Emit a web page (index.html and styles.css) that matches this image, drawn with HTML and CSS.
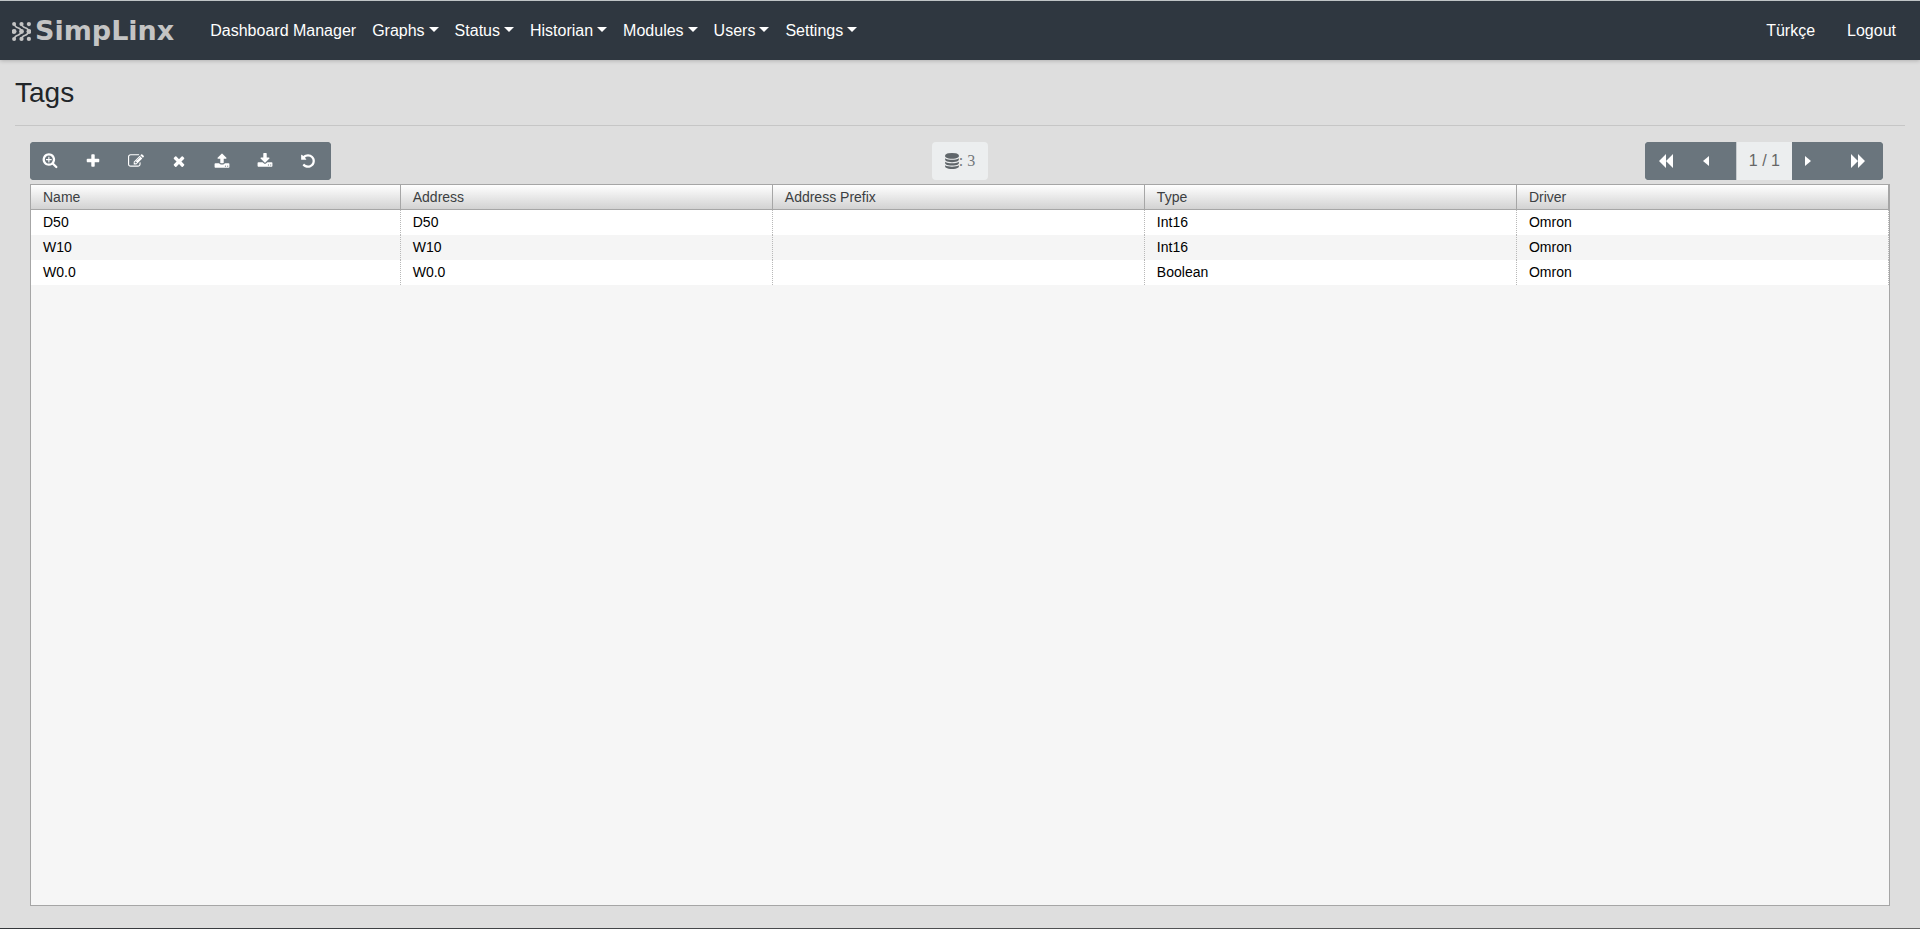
FILE: index.html
```html
<!DOCTYPE html>
<html lang="en">
<head>
    <meta charset="UTF-8">
    <meta name="viewport" content="width=device-width, initial-scale=1.0">
    <title>SimpLinx - Tags</title>
    <link rel="stylesheet" href="styles.css">
</head>
<body>
    <nav class="navbar">
        <a class="brand" href="#">
            <svg class="brand-mark" viewBox="0 0 18 18" aria-hidden="true">
                <g fill="#c4c4c4">
                    <circle cx="2" cy="2" r="1.900"/><circle cx="9" cy="2" r="2"/><circle cx="16" cy="2" r="2"/>
                    <circle cx="2" cy="9" r="2.300"/><circle cx="9" cy="9" r="2.300"/><circle cx="16" cy="9" r="2.300"/>
                    <circle cx="2" cy="16" r="1.900"/><circle cx="9" cy="16" r="2"/><circle cx="16" cy="16" r="2"/>
                </g>
                <path d="M2 2q1 3 3.500 3.500T9 9q-1 3-3.500 3.500T2 16M9 2q1 3 3.500 3.500T16 9q-1 3-3.500 3.500T9 16" fill="none" stroke="#c4c4c4" stroke-width="1.500"/>
            </svg>
            <span class="brand-name">SimpLinx</span>
        </a>
        <ul class="nav">
            <li><a class="nav-link" href="#">Dashboard Manager</a></li>
            <li><a class="nav-link dropdown" href="#">Graphs</a></li>
            <li><a class="nav-link dropdown" href="#">Status</a></li>
            <li><a class="nav-link dropdown" href="#">Historian</a></li>
            <li><a class="nav-link dropdown" href="#">Modules</a></li>
            <li><a class="nav-link dropdown" href="#">Users</a></li>
            <li><a class="nav-link dropdown" href="#">Settings</a></li>
        </ul>
        <ul class="nav nav-right">
            <li><a class="nav-link" href="#">Türkçe</a></li>
            <li><a class="nav-link" href="#">Logout</a></li>
        </ul>
    </nav>

    <main class="content">
        <h1 class="title">Tags</h1>

        <div class="panel">
            <div class="toolbar">
                <div class="btn-group">
                    <button class="btn" type="button" aria-label="Search">
                        <svg class="icon" viewBox="0 0 1664 1792"><path d="M1024 704v64q0 13-9.500 22.500t-22.500 9.500h-224v224q0 13-9.500 22.500t-22.500 9.500h-64q-13 0-22.500-9.500t-9.500-22.500v-224h-224q-13 0-22.500-9.500t-9.500-22.500v-64q0-13 9.500-22.500t22.500-9.500h224v-224q0-13 9.500-22.500t22.500-9.500h64q13 0 22.500 9.500t9.500 22.500v224h224q13 0 22.500 9.500t9.500 22.500zm128 32q0-185-131.500-316.500t-316.500-131.500-316.500 131.500-131.500 316.500 131.500 316.500 316.500 131.500 316.500-131.500 131.500-316.500zm512 832q0 53-37.500 90.500t-90.500 37.500q-54 0-90-38l-343-342q-179 124-399 124-143 0-273.500-55.500t-225-150-150-225-55.500-273.500 55.500-273.500 150-225 225-150 273.500-55.500 273.500 55.500 225 150 150 225 55.500 273.500q0 220-124 399l343 343q37 37 37 90z"/></svg>
                    </button>
                    <button class="btn" type="button" aria-label="Add">
                        <svg class="icon" viewBox="0 0 1792 1792"><path d="M1600 736v192q0 40-28 68t-68 28h-416v416q0 40-28 68t-68 28h-192q-40 0-68-28t-28-68v-416h-416q-40 0-68-28t-28-68v-192q0-40 28-68t68-28h416v-416q0-40 28-68t68-28h192q40 0 68 28t28 68v416h416q40 0 68 28t28 68z"/></svg>
                    </button>
                    <button class="btn" type="button" aria-label="Edit">
                        <svg class="icon" viewBox="0 0 1792 1792"><path d="M888 1184l116-116-152-152-116 116v56h96v96h56zm440-720q-16-16-33 1l-350 350q-17 17-1 33t33-1l350-350q17-17 1-33zm80 594v190q0 119-84.500 203.500t-203.500 84.500h-832q-119 0-203.500-84.500t-84.500-203.500v-832q0-119 84.500-203.500t203.500-84.500h832q63 0 117 25 15 7 18 23 3 17-9 29l-49 49q-14 14-32 8-23-6-45-6h-832q-66 0-113 47t-47 113v832q0 66 47 113t113 47h832q66 0 113-47t47-113v-126q0-13 9-22l64-64q15-15 35-7t20 29zm-96-738l288 288-672 672h-288v-288zm444 132l-92 92-288-288 92-92q28-28 68-28t68 28l152 152q28 28 28 68t-28 68z"/></svg>
                    </button>
                    <button class="btn" type="button" aria-label="Delete">
                        <svg class="icon" viewBox="0 0 1792 1792"><path d="M1490 1322q0 40-28 68l-136 136q-28 28-68 28t-68-28l-294-294-294 294q-28 28-68 28t-68-28l-136-136q-28-28-28-68t28-68l294-294-294-294q-28-28-28-68t28-68l136-136q28-28 68-28t68 28l294 294 294-294q28-28 68-28t68 28l136 136q28 28 28 68t-28 68l-294 294 294 294q28 28 28 68z"/></svg>
                    </button>
                    <button class="btn" type="button" aria-label="Import">
                        <svg class="icon" viewBox="0 0 1792 1792"><path d="M1344 1472q0-26-19-45t-45-19-45 19-19 45 19 45 45 19 45-19 19-45zm256 0q0-26-19-45t-45-19-45 19-19 45 19 45 45 19 45-19 19-45zm128-224v320q0 40-28 68t-68 28h-1472q-40 0-68-28t-28-68v-320q0-40 28-68t68-28h427q21 56 70.500 92t110.500 36h256q61 0 110.500-36t70.500-92h427q40 0 68 28t28 68zm-325-648q-17 40-59 40h-256v448q0 26-19 45t-45 19h-256q-26 0-45-19t-19-45v-448h-256q-42 0-59-40-17-39 14-69l448-448q18-19 45-19t45 19l448 448q31 30 14 69z"/></svg>
                    </button>
                    <button class="btn" type="button" aria-label="Export">
                        <svg class="icon" viewBox="0 0 1792 1792"><path d="M1344 1344q0-26-19-45t-45-19-45 19-19 45 19 45 45 19 45-19 19-45zm256 0q0-26-19-45t-45-19-45 19-19 45 19 45 45 19 45-19 19-45zm128-224v320q0 40-28 68t-68 28h-1472q-40 0-68-28t-28-68v-320q0-40 28-68t68-28h465l135 136q58 56 136 56t136-56l136-136h464q40 0 68 28t28 68zm-325-569q17 41-14 70l-448 448q-18 19-45 19t-45-19l-448-448q-31-29-14-70 17-39 59-39h256v-448q0-26 19-45t45-19h256q26 0 45 19t19 45v448h256q42 0 59 39z"/></svg>
                    </button>
                    <button class="btn" type="button" aria-label="Reset">
                        <svg class="icon" viewBox="0 0 1792 1792"><path d="M1664 896q0 156-61 298t-164 245-245 164-298 61q-172 0-327-72.500t-264-204.500q-7-10-6.500-22.500t8.500-20.500l137-138q10-9 25-9 16 2 23 12 73 95 179 147t225 52q104 0 198.500-40.500t163.500-109.500 109.500-163.500 40.500-198.500-40.500-198.500-109.500-163.500-163.500-109.500-198.500-40.500q-98 0-188 35.500t-160 101.500l137 138q31 30 14 69-17 40-59 40h-448q-26 0-45-19t-19-45v-448q0-42 40-59 39-17 69 14l130 129q107-101 244.500-156.500t284.500-55.500q156 0 298 61t245 164 164 245 61 298z"/></svg>
                    </button>
                </div>

                <div class="count">
                    <svg class="icon" viewBox="128 0 1536 1792" aria-hidden="true"><path d="M896 768q237 0 443-43t325-127v170q0 69-103 128t-280 93.500-385 34.500-385-34.500-280-93.500-103-128v-170q119 84 325 127t443 43zm0 768q237 0 443-43t325-127v170q0 69-103 128t-280 93.500-385 34.500-385-34.500-280-93.500-103-128v-170q119 84 325 127t443 43zm0-384q237 0 443-43t325-127v170q0 69-103 128t-280 93.500-385 34.500-385-34.500-280-93.500-103-128v-170q119 84 325 127t443 43zm0-1152q208 0 385 34.500t280 93.500 103 128v128q0 69-103 128t-280 93.500-385 34.500-385-34.500-280-93.500-103-128v-128q0-69 103-128t280-93.500 385-34.500z"/></svg>
                    <span>: 3</span>
                </div>

                <div class="btn-group pager">
                    <button class="btn" type="button" aria-label="First page">
                        <svg class="icon" viewBox="0 0 16 16"><path d="M8 1v14L1 8zM15 1v14L8 8z"/></svg>
                    </button>
                    <button class="btn" type="button" aria-label="Previous page">
                        <svg class="icon icon-caret" viewBox="0 0 6 16"><path d="M6 3v10L0 8z"/></svg>
                    </button>
                    <span class="page">1 / 1</span>
                    <button class="btn" type="button" aria-label="Next page">
                        <svg class="icon icon-caret" viewBox="0 0 6 16"><path d="M0 3v10l6-5z"/></svg>
                    </button>
                    <button class="btn" type="button" aria-label="Last page">
                        <svg class="icon" viewBox="0 0 16 16"><path d="M1 1v14l7-7zM8 1v14l7-7z"/></svg>
                    </button>
                </div>
            </div>

            <div class="grid">
                <table class="tags">
                    <thead>
                        <tr>
                            <th class="col-name">Name</th>
                            <th>Address</th>
                            <th>Address Prefix</th>
                            <th>Type</th>
                            <th>Driver</th>
                        </tr>
                    </thead>
                    <tbody>
                        <tr>
                            <td>D50</td>
                            <td>D50</td>
                            <td></td>
                            <td>Int16</td>
                            <td>Omron</td>
                        </tr>
                        <tr>
                            <td>W10</td>
                            <td>W10</td>
                            <td></td>
                            <td>Int16</td>
                            <td>Omron</td>
                        </tr>
                        <tr>
                            <td>W0.0</td>
                            <td>W0.0</td>
                            <td></td>
                            <td>Boolean</td>
                            <td>Omron</td>
                        </tr>
                    </tbody>
                </table>
            </div>
        </div>
    </main>

    <div class="bottom-bar"></div>
</body>
</html>
```
FILE: styles.css
```css
* {
    margin: 0;
    padding: 0;
    box-sizing: border-box;
}

body {
    font-family: "Liberation Sans", Arial, sans-serif;
    font-size: 16px;
    line-height: 24px;
    color: #212529;
    background: #dedede;
    min-height: 100vh;
    display: flex;
    flex-direction: column;
    border-top: 1px solid #bfc4c6;
}

/* Navbar */
.navbar {
    display: flex;
    align-items: center;
    padding: 10px 16px 9px 12px;
    background: #2f3740;
    box-shadow: 0 1px 4px rgba(0, 0, 0, 0.2);
}

.brand {
    display: flex;
    align-items: center;
    gap: 4px;
    margin-right: 28px;
    color: #c4c4c4;
    text-decoration: none;
}

.brand-mark {
    width: 19px;
    height: 19px;
}

.brand-name {
    font-family: "DejaVu Sans", sans-serif;
    font-size: 27px;
    font-weight: bold;
}

.nav {
    display: flex;
    list-style: none;
}

.nav-right {
    margin-left: auto;
    gap: 16px;
}

.nav-link {
    display: flex;
    align-items: center;
    gap: 4px;
    padding: 8px;
    color: #fff;
    text-decoration: none;
}

.dropdown::after {
    content: "";
    margin-bottom: 3px;
    border-top: 5px solid #fff;
    border-left: 5px solid transparent;
    border-right: 5px solid transparent;
}

/* Page */
.content {
    flex: 1;
    display: flex;
    flex-direction: column;
    padding: 16px 15px 22px;
}

.title {
    font-size: 28px;
    font-weight: normal;
    line-height: 34px;
    padding-bottom: 15px;
    border-bottom: 1px solid #c6c6c6;
}

.panel {
    flex: 1;
    display: flex;
    flex-direction: column;
    gap: 4px;
    padding: 16px 15px 0;
}

.toolbar {
    display: grid;
    grid-template-columns: 1fr auto 1fr;
}

.btn-group {
    display: flex;
    justify-self: start;
    height: 38px;
    border-radius: 4px;
    overflow: hidden;
    background: #6a757d;
}

.btn {
    width: 43px;
    padding: 0 0 1px 12px;
    border: 0;
    background: #6a757d;
    color: #fff;
    display: flex;
    align-items: center;
    cursor: pointer;
}

.btn:hover {
    background: #5a6268;
}

.icon {
    width: 16px;
    height: 16px;
    fill: currentColor;
}

.icon-caret {
    width: 6px;
}

.count {
    display: flex;
    align-items: center;
    padding: 0 13px;
    border-radius: 4px;
    background: #eceeef;
    color: #73787b;
    font-family: "Liberation Serif", serif;
}

.count .icon {
    width: 14px;
    color: #60666a;
}

.pager {
    justify-self: end;
    margin-right: 7px;
}

.pager .btn {
    width: 46px;
    padding-left: 13px;
}

.pager .btn + .btn {
    margin-left: -1px;
}

.page {
    padding: 7px 12px;
    background: #eceeef;
    border-left: 1px solid #c8cccf;
    color: #666;
}

/* Data grid */
.grid {
    flex: 1;
    border: 1px solid #a6a6a6;
    background: #f6f6f6;
}

.tags {
    width: 100%;
    table-layout: fixed;
    border-collapse: separate;
    border-spacing: 0;
    font-size: 14px;
    line-height: 16px;
}

.tags th,
.tags td {
    height: 25px;
    padding: 0 12px;
    text-align: left;
}

.tags th {
    font-weight: normal;
    color: #3c3f42;
    background: linear-gradient(#fff, #d2d2d2);
    border-right: 1px solid #a6a6a6;
    border-bottom: 1px solid #a6a6a6;
}

.tags .col-name {
    width: 19.9%;
}

.tags td {
    padding-bottom: 2px;
    color: #000;
    background: #fff;
    border-right: 1px dotted #b8b8b8;
}

.tags tbody tr:nth-child(even) td {
    background: #f5f5f5;
}

.bottom-bar {
    height: 1px;
    background: linear-gradient(to right, #34373b, #666);
}
```
